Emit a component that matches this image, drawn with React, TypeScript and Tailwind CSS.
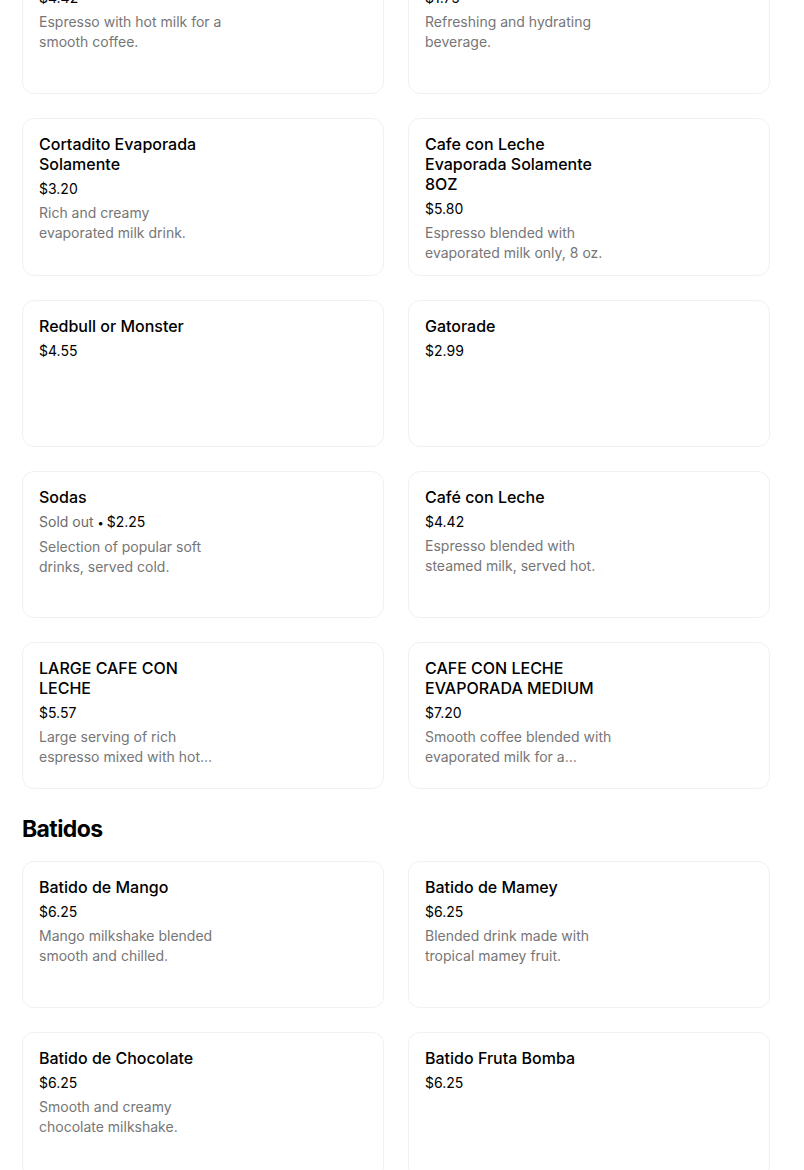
type Item = {
  name: string;
  price: string;
  description?: string;
  soldOut?: boolean;
};

const cafe: Item[] = [
  { name: 'Cafe con Leche', price: '$4.42', description: 'Espresso with hot milk for a smooth coffee.' },
  { name: 'Bottled Water', price: '$1.75', description: 'Refreshing and hydrating beverage.' },
  { name: 'Cortadito Evaporada Solamente', price: '$3.20', description: 'Rich and creamy evaporated milk drink.' },
  { name: 'Cafe con Leche Evaporada Solamente 8OZ', price: '$5.80', description: 'Espresso blended with evaporated milk only, 8 oz.' },
  { name: 'Redbull or Monster', price: '$4.55' },
  { name: 'Gatorade', price: '$2.99' },
  { name: 'Sodas', price: '$2.25', soldOut: true, description: 'Selection of popular soft drinks, served cold.' },
  { name: 'Café con Leche', price: '$4.42', description: 'Espresso blended with steamed milk, served hot.' },
  { name: 'LARGE CAFE CON LECHE', price: '$5.57', description: 'Large serving of rich espresso mixed with hot steamed milk.' },
  { name: 'CAFE CON LECHE EVAPORADA MEDIUM', price: '$7.20', description: 'Smooth coffee blended with evaporated milk for a creamy taste.' },
];

const batidos: Item[] = [
  { name: 'Batido de Mango', price: '$6.25', description: 'Mango milkshake blended smooth and chilled.' },
  { name: 'Batido de Mamey', price: '$6.25', description: 'Blended drink made with tropical mamey fruit.' },
  { name: 'Batido de Chocolate', price: '$6.25', description: 'Smooth and creamy chocolate milkshake.' },
  { name: 'Batido Fruta Bomba', price: '$6.25' },
];

function MenuCard({ item }: { item: Item }) {
  return (
    <div className="min-h-[147px] rounded-xl border border-[#f1f1f1] bg-white px-4 pt-[15px] pb-3">
      <h3 className="w-[186px] text-[16px] font-medium leading-5 text-black">{item.name}</h3>
      <p className="mt-[5px] text-[14px] leading-5 text-black">
        {item.soldOut && <span className="text-[#6b6b6b]">Sold out </span>}
        {item.soldOut && <span className="text-[11px]">• </span>}
        {item.price}
      </p>
      {item.description && (
        <p className="mt-1 line-clamp-2 w-[187px] text-[14px] leading-5 text-[#767676]">{item.description}</p>
      )}
    </div>
  );
}

export default function App() {
  return (
    <div className="h-[1170px] overflow-hidden bg-white font-['Inter',sans-serif] antialiased">
      <div className="w-[771px] px-[22px]">
        <div className="-mt-[53px] grid grid-cols-[362px_362px] gap-x-6 gap-y-6">
          {cafe.map((item) => (
            <MenuCard key={item.name} item={item} />
          ))}
        </div>

        <h2 className="mt-6 mb-4 text-[23px] font-bold leading-8 tracking-[-0.6px] text-black">Batidos</h2>

        <div className="grid grid-cols-[362px_362px] gap-x-6 gap-y-6">
          {batidos.map((item) => (
            <MenuCard key={item.name} item={item} />
          ))}
        </div>
      </div>
    </div>
  );
}
